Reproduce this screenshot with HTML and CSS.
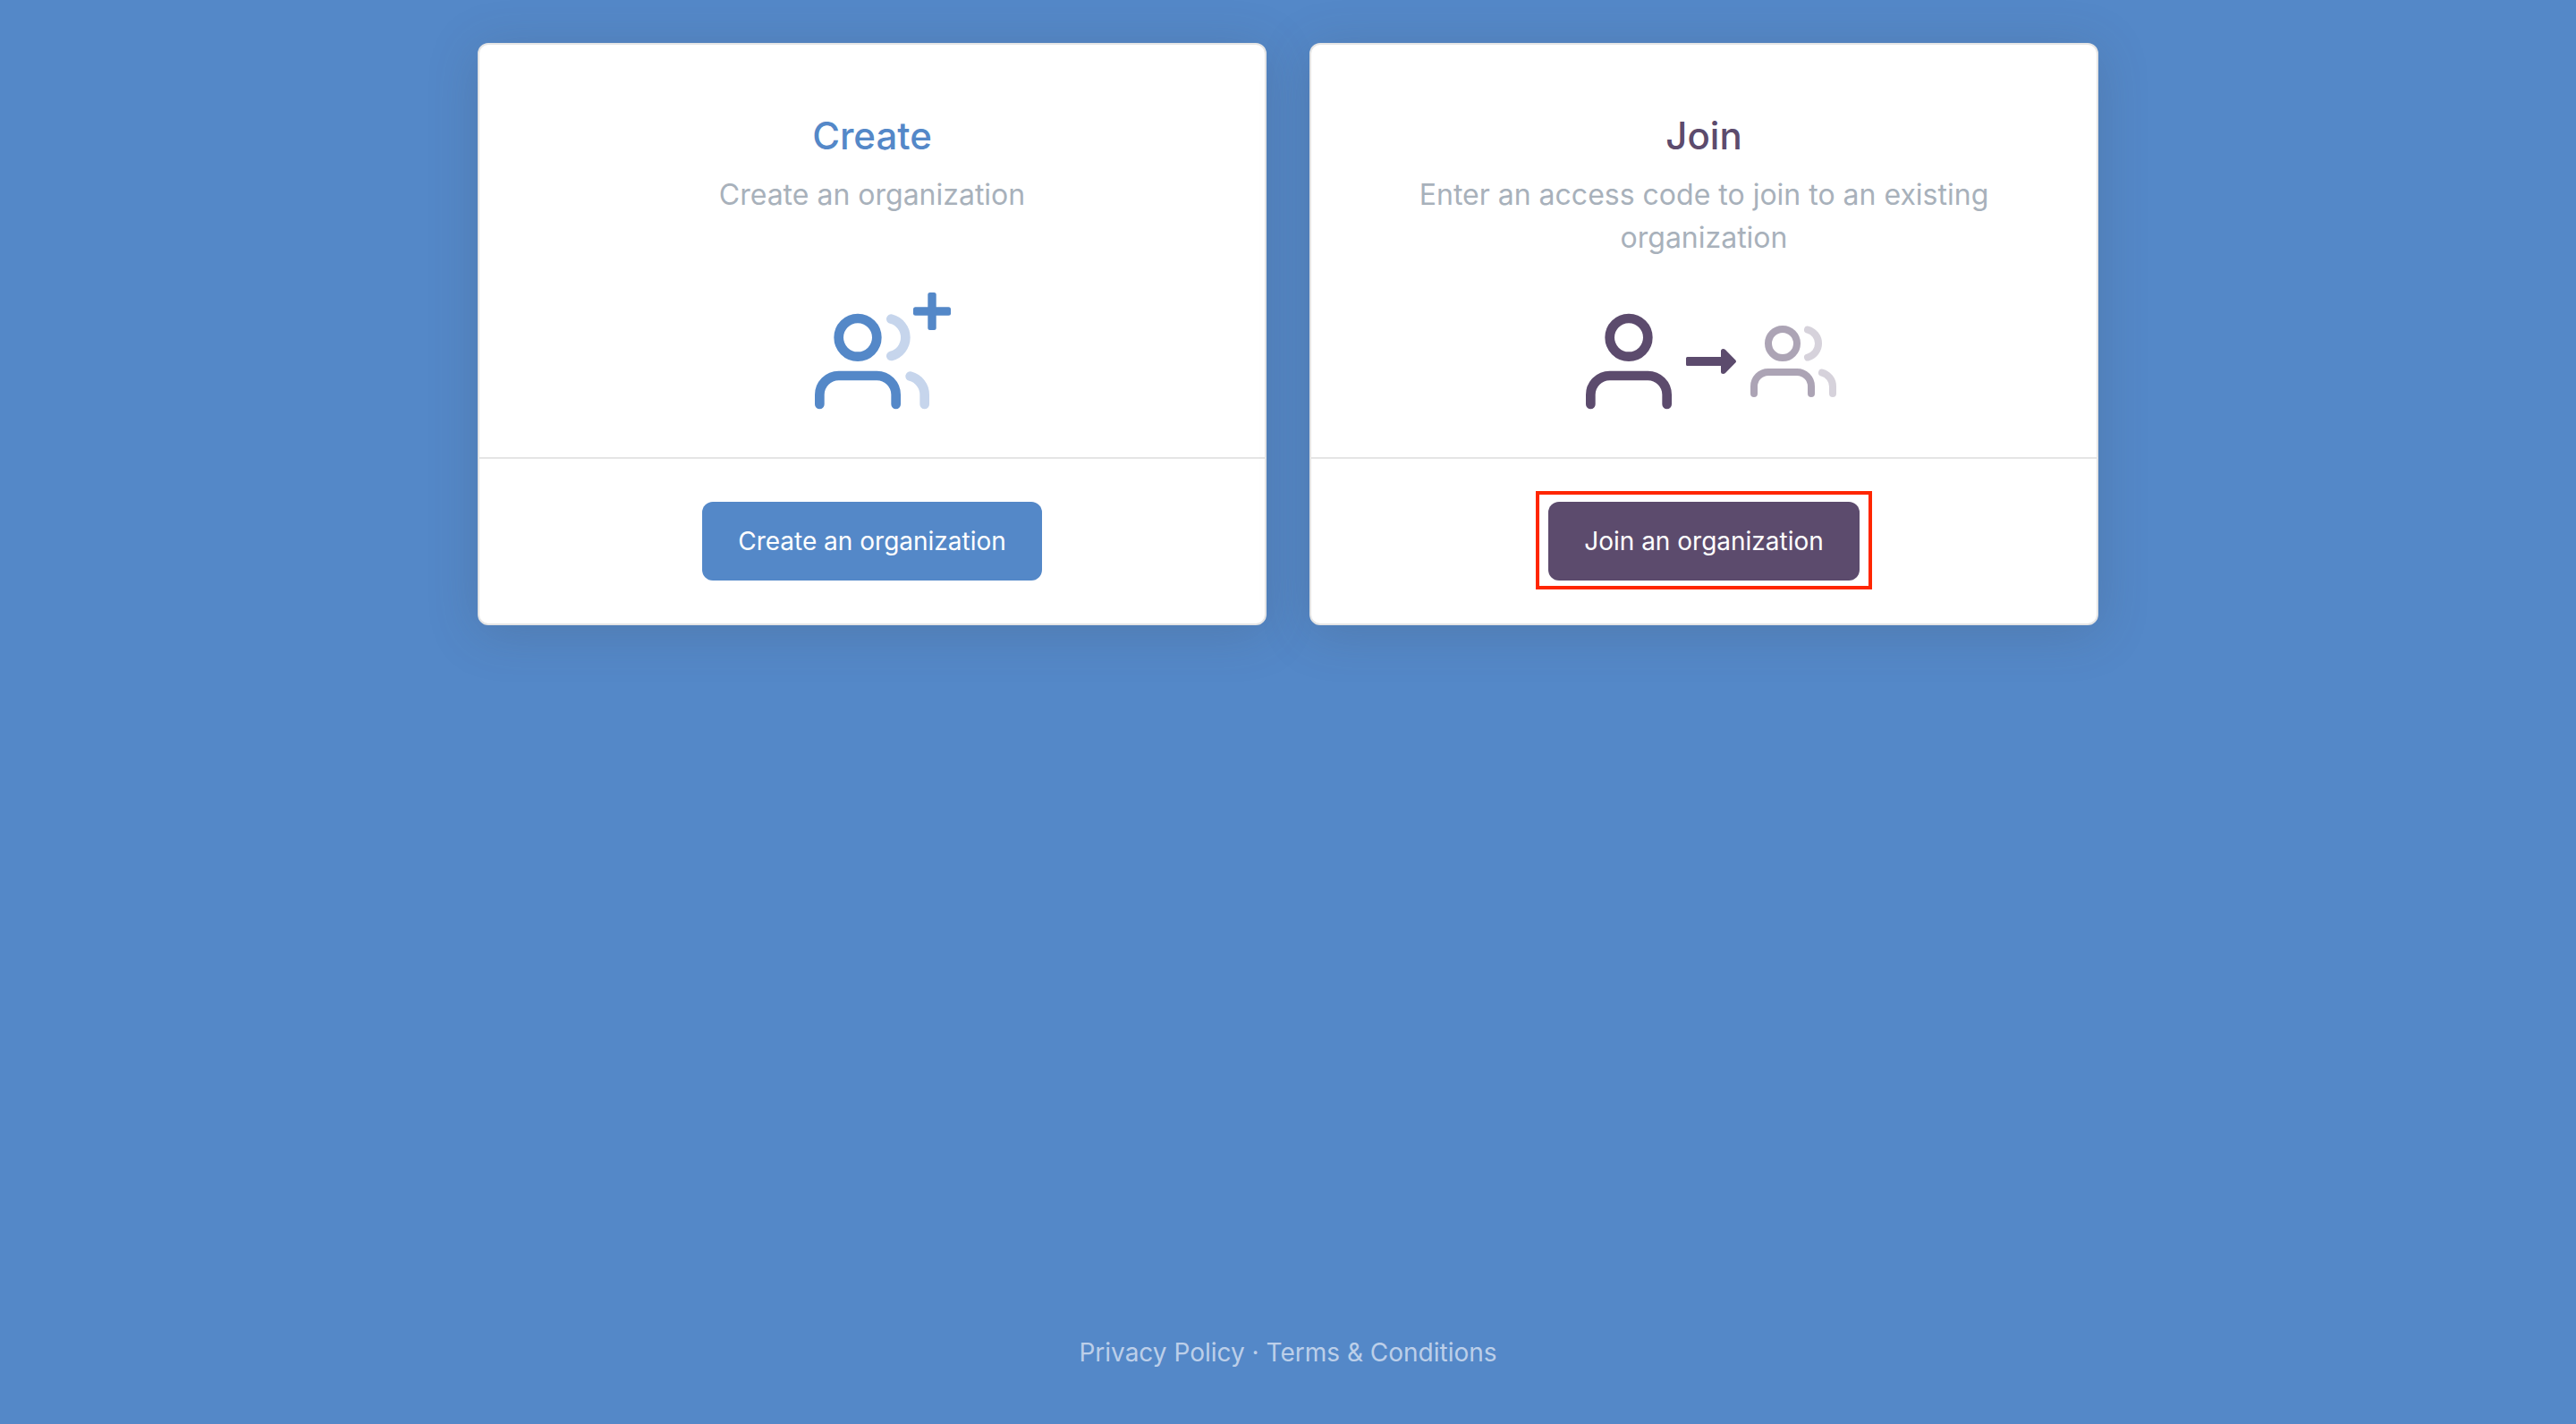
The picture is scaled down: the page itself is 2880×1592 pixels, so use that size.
FILE: index.html
```html
<!DOCTYPE html>
<html lang="en">
<head>
<meta charset="utf-8">
<meta name="viewport" content="width=device-width, initial-scale=1">
<title>Create or join an organization</title>
<link rel="stylesheet" href="styles.css">
</head>
<body>
<main class="choices">
  <section class="card card-create">
    <div class="card-body">
      <h2 class="card-title">Create</h2>
      <p class="card-text">Create an organization</p>
      <div class="icons">
        <div class="icon-group">
          <svg class="icon icon-large" viewBox="0 0 24 24" aria-hidden="true">
            <circle cx="9" cy="7" r="4"/>
            <path d="M17 21v-2a4 4 0 0 0-4-4H5a4 4 0 0 0-4 4v2"/>
            <path class="faded" d="M23 21v-2a4 4 0 0 0-3-3.87M16 3.13a4 4 0 0 1 0 7.75"/>
          </svg>
          <svg class="plus" viewBox="0 0 42 42" aria-hidden="true">
            <rect x="0" y="16.300" width="42" height="9.400" rx="2.500"/>
            <rect x="16.300" y="0" width="9.400" height="42" rx="2.500"/>
          </svg>
        </div>
      </div>
    </div>
    <div class="card-footer">
      <button class="button" type="button">Create an organization</button>
    </div>
  </section>
  <section class="card card-join">
    <div class="card-body">
      <h2 class="card-title">Join</h2>
      <p class="card-text">Enter an access code to join to an existing organization</p>
      <div class="icons">
        <svg class="icon icon-large" viewBox="0 0 24 24" aria-hidden="true">
          <circle cx="12" cy="7" r="4"/>
          <path d="M20 21v-2a4 4 0 0 0-4-4H8a4 4 0 0 0-4 4v2"/>
        </svg>
        <svg class="arrow" viewBox="0 0 56 28" aria-hidden="true">
          <path d="M1.500 9H39V2.500Q39 0 41.500 0Q43 0 44 1L55.500 12.700Q56.500 14 55.500 15.300L44 27Q43 28 41.500 28Q39 28 39 25.500V19H1.500Q0 19 0 17.500V10.500Q0 9 1.500 9Z"/>
        </svg>
        <svg class="icon icon-small" viewBox="0 0 24 24" aria-hidden="true">
          <circle cx="9" cy="7" r="4"/>
          <path d="M17 21v-2a4 4 0 0 0-4-4H5a4 4 0 0 0-4 4v2"/>
          <path class="faded" d="M23 21v-2a4 4 0 0 0-3-3.87M16 3.13a4 4 0 0 1 0 7.75"/>
        </svg>
      </div>
    </div>
    <div class="card-footer">
      <button class="button highlighted" type="button">Join an organization</button>
    </div>
  </section>
</main>
<footer class="page-footer">
  <a href="#privacy">Privacy Policy</a> · <a href="#terms">Terms &amp; Conditions</a>
</footer>
</body>
</html>
```
FILE: styles.css
```css
* {
  box-sizing: border-box;
}

body {
  margin: 0;
  min-height: 100vh;
  display: flex;
  flex-direction: column;
  justify-content: space-between;
  padding: 48px 24px 56px;
  background: #5488c8;
  font-family: Inter, "Open Sans", sans-serif;
}

.choices {
  width: 100%;
  max-width: 1812px;
  margin: 0 auto;
  display: grid;
  grid-template-columns: repeat(auto-fit, minmax(min(100%, 480px), 1fr));
  gap: 48px;
}

.card {
  --accent: #5488c8;
  --accent-faded: #c6d5ec;
  display: flex;
  flex-direction: column;
  background: #fff;
  border: 2px solid #e5e5e5;
  border-radius: 12px;
  box-shadow: 0 8px 56px rgba(70, 75, 83, 0.22);
  text-align: center;
}

.card-join {
  --accent: #5c4b6d;
  --accent-faded: #afa7b8;
}

.card-body {
  flex: 1;
  padding: 80px 96px 43px;
}

.card-title {
  margin: 0 0 20px;
  font-size: 42px;
  line-height: 44px;
  font-weight: 500;
  color: var(--accent);
}

.card-text {
  margin: 0 0 50px;
  min-height: 96px;
  font-size: 32px;
  line-height: 48px;
  color: #a8b1bb;
}

.icons {
  display: flex;
  align-items: center;
  justify-content: center;
  color: var(--accent);
}

.icon-group {
  position: relative;
  display: flex;
}

.icon {
  fill: none;
  stroke: currentColor;
  stroke-width: 2;
  stroke-linecap: round;
  stroke-linejoin: round;
}

.icon-large {
  width: 128px;
  height: 128px;
}

.icon-small {
  width: 96px;
  height: 96px;
  opacity: 0.5;
}

.faded {
  stroke: var(--accent-faded);
}

.plus {
  position: absolute;
  top: -13px;
  right: -24px;
  width: 42px;
  height: 42px;
  fill: currentColor;
}

.arrow {
  width: 56px;
  height: 28px;
  margin-right: 16px;
  fill: currentColor;
}

.card-footer {
  display: flex;
  justify-content: center;
  padding: 48px;
  border-top: 2px solid #e5e5e5;
}

.button {
  position: relative;
  height: 88px;
  padding: 0 40px;
  border: 0;
  border-radius: 12px;
  background: var(--accent);
  color: #fff;
  font: inherit;
  font-size: 28px;
  cursor: pointer;
}

.highlighted::after {
  content: "";
  position: absolute;
  inset: -12px -14px -10px;
  border: 4px solid #ff2600;
}

.page-footer {
  padding-top: 48px;
  text-align: center;
  font-size: 28px;
  line-height: 48px;
  color: #bccfe9;
}

.page-footer a {
  color: inherit;
  text-decoration: none;
}
```
